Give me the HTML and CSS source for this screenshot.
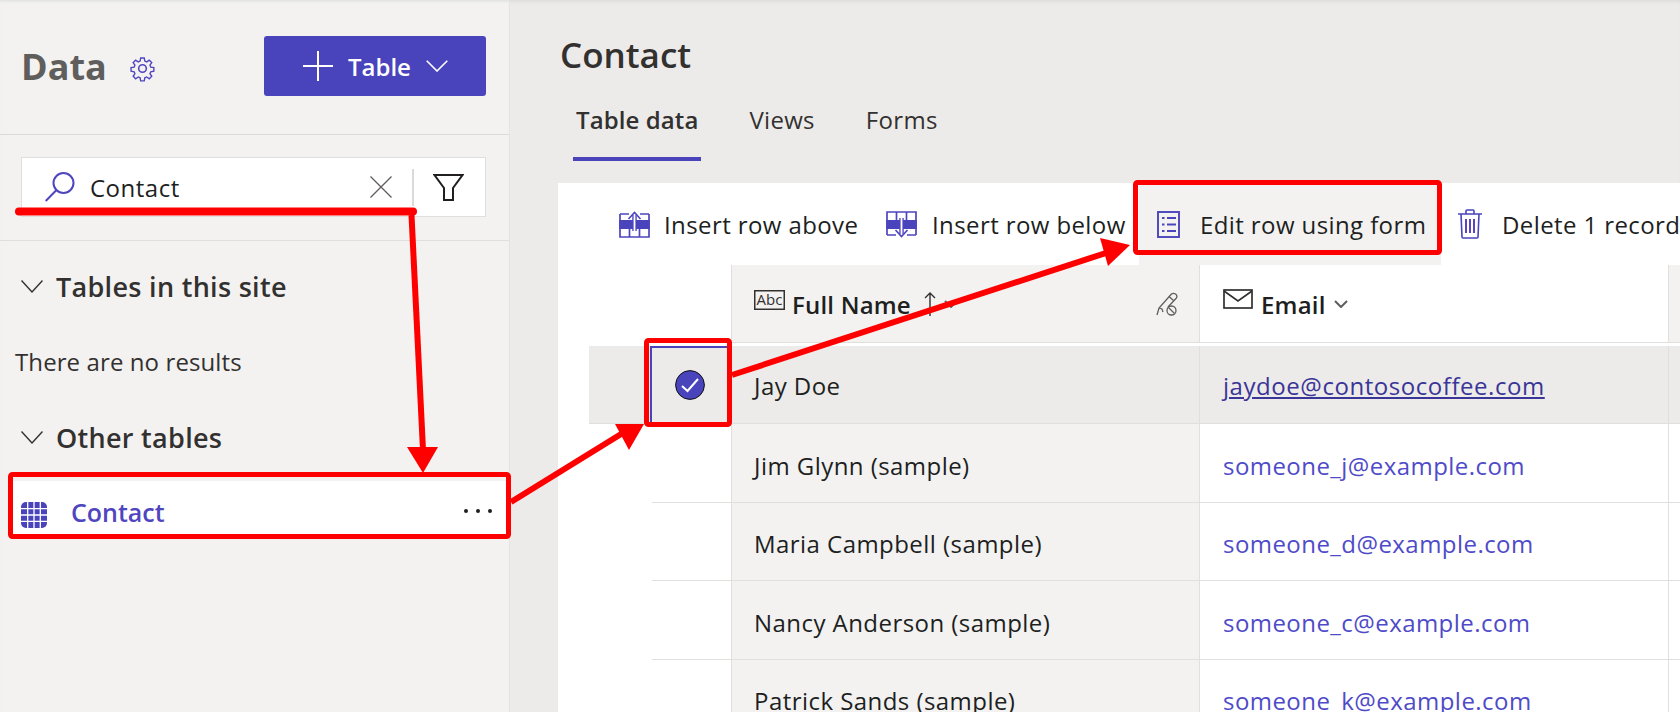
FILE: index.html
```html
<!DOCTYPE html>
<html lang="en">
<head>
<meta charset="utf-8">
<title>Data - Contact</title>
<link rel="stylesheet" href="styles.css">
</head>
<body>
<div class="app">
  <aside class="sidebar">
    <header class="side-head">
      <h1 class="side-title">Data</h1>
      <svg class="gear" viewBox="0 0 24 24"><path d="M10.2 1.5h3.6l.6 3.1 1.9.8 2.6-1.8 2.5 2.5-1.8 2.6.8 1.9 3.1.6v3.6l-3.1.6-.8 1.9 1.8 2.6-2.5 2.5-2.6-1.8-1.9.8-.6 3.1h-3.6l-.6-3.1-1.9-.8-2.6 1.8-2.5-2.5 1.8-2.6-.8-1.9-3.1-.6v-3.6l3.1-.6.8-1.9-1.8-2.6 2.5-2.5 2.6 1.8 1.9-.8z" transform="translate(1.4 1.4) scale(.88)"/><circle cx="12" cy="12" r="3.4"/></svg>
      <button class="add-btn">
        <svg class="add-plus" viewBox="0 0 30 30"><path d="M15 0v30M0 15h30"/></svg>
        <span>Table</span>
        <svg class="add-chev" viewBox="0 0 22 12"><path d="M.7.7 11 11 21.3.7"/></svg>
      </button>
    </header>
    <div class="search-wrap">
      <div class="search">
        <svg class="search-ico" viewBox="0 0 30 30"><circle cx="18.5" cy="11" r="10"/><path d="M11.5 18 .7 29"/></svg>
        <span class="search-text">Contact</span>
        <svg class="search-x" viewBox="0 0 22 22"><path d="M.5.5l21 21M21.500.5l-21 21"/></svg>
        <span class="search-sep"></span>
        <svg class="filter" viewBox="0 0 31 27"><path d="M1.500 1h28L20 14v12h-9V14z"/></svg>
      </div>
    </div>
    <section class="tree">
      <h2 class="tree-head">
        <svg class="tree-chev" viewBox="0 0 22 13"><path d="M.5.5 11 12 21.500.5"/></svg>
        Tables in this site
      </h2>
      <p class="tree-empty">There are no results</p>
      <h2 class="tree-head tree-head-b">
        <svg class="tree-chev" viewBox="0 0 22 13"><path d="M.5.5 11 12 21.500.5"/></svg>
        Other tables
      </h2>
      <div class="tree-item">
        <svg class="grid-ico" viewBox="0 0 26 26"><rect width="26" height="26" rx="5"/><path d="M6.700 0v26M13 0v26M19.300 0v26M0 6.700h26M0 13h26M0 19.300h26"/></svg>
        <span class="tree-name">Contact</span>
        <svg class="tree-more" viewBox="0 0 28 4"><circle cx="2" cy="2" r="2"/><circle cx="14" cy="2" r="2"/><circle cx="26" cy="2" r="2"/></svg>
      </div>
    </section>
  </aside>

  <main class="main">
    <h1 class="page-title">Contact</h1>
    <nav class="tabs">
      <span class="tab tab-on">Table data</span>
      <span class="tab">Views</span>
      <span class="tab">Forms</span>
    </nav>
    <section class="panel">
      <div class="toolbar">
        <div class="cmd cmd-a">
          <svg class="ico-tbl" viewBox="0 0 31 27"><rect class="f" x="0" y="9" width="31" height="9"/><path class="o" d="M1 3h9M21 3h9M1 3v23h29V3M10.500 18v8M20.500 18v8"/><path class="a1" d="M15.500 20V4"/><path class="a2" d="M15.500 20V4"/><path class="o" d="M9.500 8l6-6.500 6 6.500"/></svg>
          <span>Insert row above</span>
        </div>
        <div class="cmd cmd-b">
          <svg class="ico-tbl" viewBox="0 0 31 27"><g transform="matrix(1 0 0 -1 0 27)"><rect class="f" x="0" y="9" width="31" height="9"/><path class="o" d="M1 3h9M21 3h9M1 3v23h29V3M10.500 18v8M20.500 18v8"/><path class="a1" d="M15.500 20V4"/><path class="a2" d="M15.500 20V4"/><path class="o" d="M9.500 8l6-6.500 6 6.500"/></g></svg>
          <span>Insert row below</span>
        </div>
        <div class="cmd cmd-c">
          <svg class="ico-form" viewBox="0 0 23 27"><rect x="1" y="1" width="21" height="25"/><path d="M5 7h2.500M10 7h9M5 13.500h2.500M10 13.500h9M5 20h2.500M10 20h9"/></svg>
          <span>Edit row using form</span>
        </div>
        <div class="cmd cmd-d">
          <svg class="ico-trash" viewBox="0 0 24 30"><path d="M0 5h24M8 5V2q0-1 1-1h6q1 0 1 1v3M3 5l1 23q0 1 1 1h14q1 0 1-1l1-23"/><path class="bars" d="M8 10v14M12 10v14M16 10v14"/></svg>
          <span>Delete 1 record</span>
        </div>
      </div>
      <div class="grid">
        <div class="row row-head">
          <div class="c-sel"></div>
          <div class="c-name c-head">
            <svg class="ico-abc" viewBox="0 0 31 20"><rect x=".75" y=".75" width="29.500" height="18.500"/><text x="15.500" y="15" text-anchor="middle">Abc</text></svg>
            <b class="head-text">Full Name</b>
            <svg class="sort" viewBox="0 0 12 24"><path d="M6 24V1M1 6l5-5 5 5"/></svg>
            <svg class="head-chev" viewBox="0 0 14 8"><path d="M1 1l6 6 6-6"/></svg>
            <svg class="ico-pen" viewBox="0 0 22 24"><path d="M1 23l2-7L15 2.500c1.500-1.500 3-1.500 4.500-.5s2 3 .5 4.500L12 15"/><path d="M3 16l3 1 1 3M13 4.500l4.500 4"/><circle cx="15.500" cy="18.500" r="4.500"/><path d="M12.500 15.500l6 6"/></svg>
          </div>
          <div class="c-mail c-head">
            <svg class="ico-mail" viewBox="0 0 30 20"><rect x="1" y="1" width="28" height="18"/><path d="M1 2l14 10L29 2"/></svg>
            <b class="head-text">Email</b>
            <svg class="head-chev" viewBox="0 0 14 8"><path d="M1 1l6 6 6-6"/></svg>
          </div>
          <div class="c-end"></div>
        </div>
        <div class="row row-on">
          <div class="c-sel">
            <svg class="check" viewBox="0 0 30 30"><circle cx="15" cy="15" r="14.400"/><path d="M7 16l5.500 5L23 9"/></svg>
          </div>
          <div class="c-name">Jay Doe</div>
          <div class="c-mail"><a class="mail mail-on">jaydoe@contosocoffee.com</a></div>
          <div class="c-end"></div>
        </div>
        <div class="row">
          <div class="c-sel"></div>
          <div class="c-name">Jim Glynn (sample)</div>
          <div class="c-mail"><a class="mail">someone_j@example.com</a></div>
          <div class="c-end"></div>
        </div>
        <div class="row">
          <div class="c-sel"></div>
          <div class="c-name">Maria Campbell (sample)</div>
          <div class="c-mail"><a class="mail">someone_d@example.com</a></div>
          <div class="c-end"></div>
        </div>
        <div class="row">
          <div class="c-sel"></div>
          <div class="c-name">Nancy Anderson (sample)</div>
          <div class="c-mail"><a class="mail">someone_c@example.com</a></div>
          <div class="c-end"></div>
        </div>
        <div class="row">
          <div class="c-sel"></div>
          <div class="c-name">Patrick Sands (sample)</div>
          <div class="c-mail"><a class="mail">someone_k@example.com</a></div>
          <div class="c-end"></div>
        </div>
      </div>
    </section>
  </main>

  <svg class="marks" viewBox="0 0 1680 712">
    <path class="m-line" d="M19 211.500H413"/>
    <path class="m-thin" d="M411.500 215 423 450"/>
    <path class="m-head" d="M407 447H438L423 473z"/>
    <rect class="m-box" x="10.500" y="474.500" width="498" height="62" rx="2"/>
    <path class="m-thin" d="M511 502 626 431"/>
    <path class="m-head" d="M615 424H644L629 450z"/>
    <rect class="m-box" x="646.500" y="340.500" width="83" height="84" rx="2"/>
    <path class="m-thin" d="M732 375 1112 251"/>
    <path class="m-head" d="M1100 238 1130 245 1108 266z"/>
    <rect class="m-box" x="1135.500" y="182.500" width="304" height="70" rx="2"/>
  </svg>
</div>
</body>
</html>
```

FILE: styles.css
```css
* { box-sizing: border-box; }
html, body { margin: 0; height: 712px; overflow: hidden; }
body { font-family: "Open Sans", "Liberation Sans", sans-serif; color: #323130; background: #edebe9; }
svg { display: block; flex: none; fill: none; }
h1, h2, p { margin: 0; }

.app { position: relative; display: flex; height: 712px; overflow: hidden; box-shadow: inset 0 3px 3px -1px #ddd; }

/* sidebar */
.sidebar { width: 510px; flex: none; background: #f3f2f1; border-right: 1px solid #e6e4e2; box-shadow: inset 0 3px 3px -2px #ddd; }
.side-head { display: flex; align-items: center; height: 135px; padding: 0 23px 2px 21px; border-bottom: 1px solid #dcdad8; }
.side-title { font-size: 36px; font-weight: 700; color: #605e5c; line-height: 40px; margin-top: 2px; }
.gear { width: 27px; height: 27px; margin: 4px 0 0 22px; stroke: #4f46bf; stroke-width: 1.4; }
.add-btn { display: flex; align-items: center; width: 222px; height: 60px; margin-left: auto; padding: 0 0 0 39px; background: #4a44bc; border: 0; border-radius: 3px; color: #fff; font: 600 24px "Open Sans", sans-serif; }
.add-plus { width: 30px; height: 30px; stroke: #fff; stroke-width: 2; margin-right: 15px; }
.add-chev { width: 22px; height: 12px; stroke: #fff; stroke-width: 1.6; margin-left: 15px; }

.search-wrap { height: 106px; padding: 22px 23px 0 21px; border-bottom: 1px solid #e1dfdd; }
.search { display: flex; align-items: center; height: 60px; background: #fff; border: 1px solid #e1dfdd; padding: 0 21px 0 23px; }
.search-ico { width: 30px; height: 30px; stroke: #4f46bf; stroke-width: 2; margin-top: -1px; }
.search-text { font-size: 24px; letter-spacing: .5px; margin-left: 15px; color: #201f1e; line-height: 30px; padding-top: 1px; }
.search-x { width: 22px; height: 22px; stroke: #605e5c; stroke-width: 1.3; margin-left: auto; }
.search-sep { width: 2px; height: 37px; background: #dcdad8; margin: 0 19px 0 20px; }
.filter { width: 31px; height: 27px; stroke: #201f1e; stroke-width: 2; }

.tree { padding-top: 22px; }
.tree-head { display: flex; align-items: center; gap: 13px; height: 46px; padding-left: 21px; font-size: 27px; letter-spacing: .3px; font-weight: 600; color: #323130; }
.tree-head-b { margin-top: 36px; }
.tree-chev { width: 22px; height: 13px; stroke: #323130; stroke-width: 1.4; }
.tree-empty { font-size: 24px; letter-spacing: .1px; padding-left: 15px; margin-top: 37px; line-height: 32px; }
.tree-item { display: flex; align-items: center; height: 56px; margin: 21px 0 0 10px; padding: 6px 17px 0 11px; background: #fff; width: 499px; }
.grid-ico { width: 26px; height: 26px; margin-top: 6px; }
.grid-ico rect { fill: #4a44bc; }
.grid-ico path { stroke: #fff; stroke-width: 1.300; }
.tree-name { margin-left: 24px; font-size: 25px; font-weight: 600; color: #4f46bf; }
.tree-more { width: 28px; height: 4px; margin: -2px 0 0 auto; fill: #201f1e; }

/* main */
.main { flex: 1; min-width: 0; padding: 0 0 0 48px; }
.page-title { font-size: 35px; font-weight: 600; line-height: 46px; padding: 32px 0 0 2px; height: 78px; color: #323130; }
.tabs { display: flex; height: 105px; margin-left: 15px; gap: 45px; align-items: flex-start; padding-top: 20px; }
.tab { font-size: 24px; letter-spacing: .3px; line-height: 44px; height: 63px; padding: 0 3px; }
.tab-on { font-weight: 600; letter-spacing: .1px; border-bottom: 4px solid #4a44bc; }

.panel { background: #fff; height: 529px; }
.toolbar { display: flex; align-items: center; height: 82px; font-size: 24px; letter-spacing: .4px; color: #201f1e; }
.cmd { display: flex; align-items: center; height: 82px; flex: none; white-space: nowrap; }
.cmd-a { margin-left: 61px; width: 267px; gap: 14px; }
.cmd-b { width: 253px; gap: 15px; }
.cmd-c { width: 302px; padding-left: 18px; gap: 20px; background: #f3f2f1; }
.cmd-d { margin-left: 17px; gap: 20px; }
.ico-tbl { width: 31px; height: 27px; }
.ico-tbl .o { stroke: #4f46bf; stroke-width: 1.700; fill: none; }
.ico-tbl .f { fill: #4a44bc; }
.ico-tbl .a1 { stroke: #4f46bf; stroke-width: 4.500; }
.ico-tbl .a2 { stroke: #fff; stroke-width: 1.800; }
.ico-form { width: 23px; height: 27px; stroke: #4a44bc; stroke-width: 1.900; }
.ico-trash { width: 24px; height: 30px; stroke: #4a44bc; stroke-width: 1.600; }
.ico-trash .bars { stroke-width: 2; stroke: #5a45c0; }

.grid { display: flex; flex-direction: column; margin-left: 31px; }
.row { display: flex; height: 78.500px; flex: none; margin-left: 63px; border-bottom: 1px solid #e1dfdd; font-size: 24px; letter-spacing: .45px; color: #201f1e; }
.row-head { height: 78px; margin-bottom: 3px; }
.row-on { margin-left: 0; background: #edebe9; height: 78px; }
.c-sel { width: 79px; flex: none; display: flex; align-items: center; justify-content: center; }
.row-on .c-sel { position: relative; width: 142px; padding: 1px 3px 0 63px; }
.row-on .c-sel::before { content: ""; position: absolute; left: 61px; top: 0; right: 0; bottom: 0; border-left: 2px solid #4a44bc; border-top: 2px solid #4a44bc; }
.c-name { width: 469px; flex: none; display: flex; align-items: center; padding: 5px 0 0 22px; background: #f3f2f1; border-left: 1px solid #e1dfdd; border-right: 1px solid #e1dfdd; }
.c-mail { width: 469px; flex: none; display: flex; align-items: center; padding: 5px 0 0 23px; border-right: 1px solid #e1dfdd; }
.row-on .c-name { background: transparent; padding-top: 2px; }
.row-on .c-mail { padding-top: 2px; }
.c-end { flex: 1; }
.row-head .c-end { background: #f3f2f1; }
.c-head { padding-top: 1px; }
.head-text { font-weight: 600; font-size: 24px; letter-spacing: .2px; }
.ico-abc { width: 31px; height: 20px; margin-right: 7px; margin-top: -9px; stroke: #323130; }
.ico-abc rect { stroke-width: 1.500; }
.ico-abc text { font: 15px "Open Sans", sans-serif; letter-spacing: 0; fill: #323130; stroke: none; }
.sort { width: 12px; height: 24px; margin-left: 13px; stroke: #323130; stroke-width: 1.400; }
.head-chev { width: 14px; height: 8px; stroke: #605e5c; stroke-width: 2; margin-left: 8px; }
.ico-pen { width: 22px; height: 24px; stroke: #605e5c; stroke-width: 1.300; margin-left: auto; margin-right: 21px; }
.ico-mail { width: 30px; height: 20px; margin-right: 8px; margin-top: -10px; stroke: #323130; stroke-width: 1.700; }
.mail { color: #4f4bc8; }
.mail-on { color: #3a3598; letter-spacing: .55px; text-decoration: underline; }
.check { width: 30px; height: 30px; }
.check circle { fill: #4a44bc; stroke: #111; stroke-width: 1; }
.check path { stroke: #fff; stroke-width: 2; }

/* annotations drawn over the screenshot */
.marks { position: absolute; inset: 0; width: 1680px; height: 712px; pointer-events: none; }
.m-line { stroke: #f00; stroke-width: 8; stroke-linecap: round; }
.m-thin { stroke: #f00; stroke-width: 6; }
.m-head { fill: #f00; }
.m-box { stroke: #f00; stroke-width: 5; fill: none; }
```
